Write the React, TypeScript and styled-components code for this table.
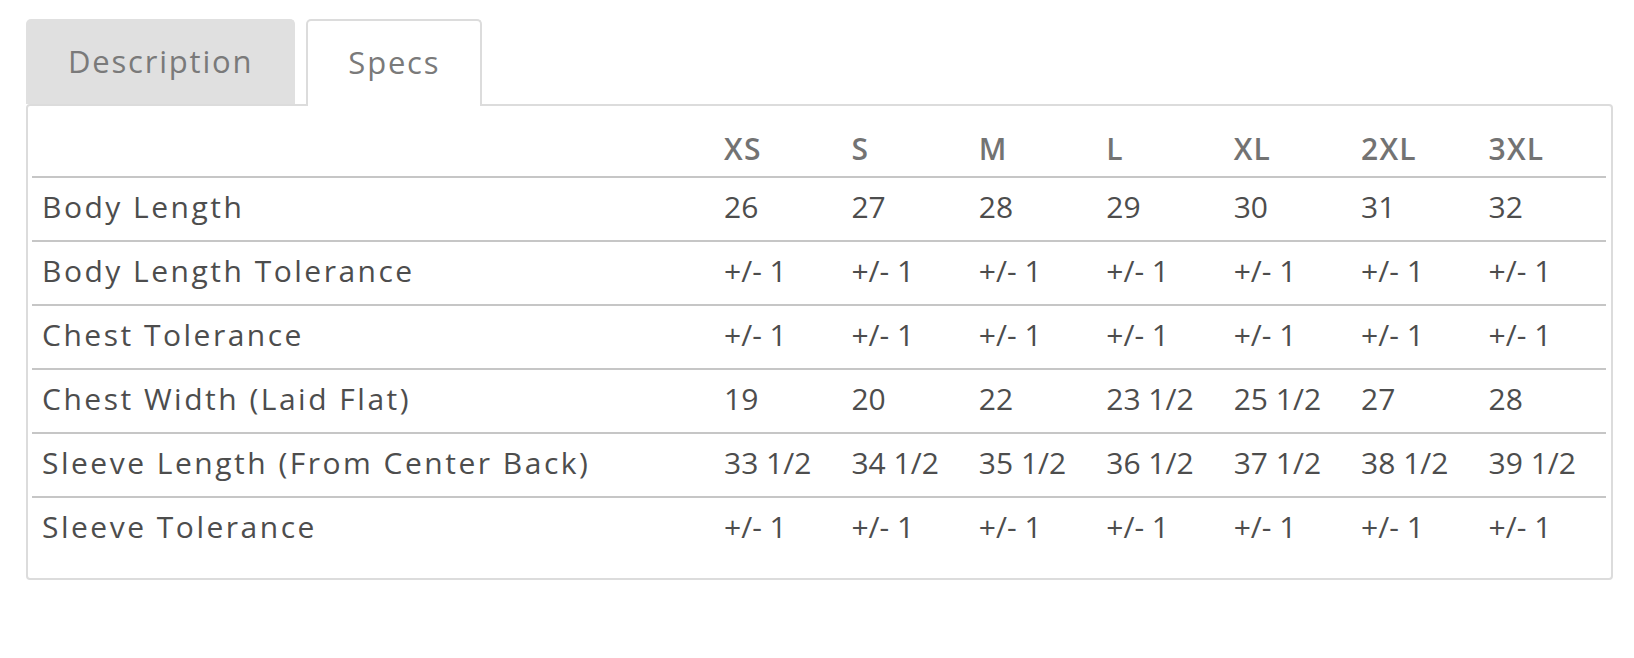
import React from "react";
import styled, { createGlobalStyle } from "styled-components";

const sizes = ["XS", "S", "M", "L", "XL", "2XL", "3XL"];

const rows: { label: string; values: string[] }[] = [
  { label: "Body Length", values: ["26", "27", "28", "29", "30", "31", "32"] },
  { label: "Body Length Tolerance", values: Array(7).fill("+/- 1") },
  { label: "Chest Tolerance", values: Array(7).fill("+/- 1") },
  {
    label: "Chest Width (Laid Flat)",
    values: ["19", "20", "22", "23 1/2", "25 1/2", "27", "28"],
  },
  {
    label: "Sleeve Length (From Center Back)",
    values: ["33 1/2", "34 1/2", "35 1/2", "36 1/2", "37 1/2", "38 1/2", "39 1/2"],
  },
  { label: "Sleeve Tolerance", values: Array(7).fill("+/- 1") },
];

const GlobalStyle = createGlobalStyle`
  body {
    margin: 0;
    background: #fff;
    font-family: "Open Sans", "Liberation Sans", sans-serif;
  }
`;

const App = () => {
  return (
    <Page>
      <GlobalStyle />
      <TabBar>
        <Tab>Description</Tab>
        <Tab active>Specs</Tab>
      </TabBar>
      <Panel>
        <SpecTable>
          <colgroup>
            <col style={{ width: 682 }} />
            {sizes.map((s) => (
              <col key={s} />
            ))}
          </colgroup>
          <thead>
            <tr>
              <HeadCell />
              {sizes.map((s) => (
                <HeadCell key={s}>{s}</HeadCell>
              ))}
            </tr>
          </thead>
          <tbody>
            {rows.map((r) => (
              <tr key={r.label}>
                <Cell label>{r.label}</Cell>
                {r.values.map((v, i) => (
                  <Cell key={i}>{v}</Cell>
                ))}
              </tr>
            ))}
          </tbody>
        </SpecTable>
      </Panel>
    </Page>
  );
};
export default App;

const Page = styled.div`
  padding: 19px 0 0 26px;
  width: 1587px;
`;

const TabBar = styled.div`
  display: flex;
  gap: 11px;
  position: relative;
  z-index: 1;
`;

const Tab = styled.div<{ active?: boolean }>`
  box-sizing: border-box;
  padding: 0 40px 4px;
  display: flex;
  align-items: center;
  font-size: 31px;
  letter-spacing: 1.8px;
  color: #7a7a7a;
  border-radius: 5px 5px 0 0;
  background: ${(p) => (p.active ? "#fff" : "#e0e0e0")};
  border: 2px solid ${(p) => (p.active ? "#dcdcdc" : "#e0e0e0")};
  border-bottom: none;
  margin-bottom: ${(p) => (p.active ? "-2px" : "0")};
  height: ${(p) => (p.active ? "87px" : "85px")};
`;

const Panel = styled.div`
  border: 2px solid #dcdcdc;
  border-radius: 4px;
  padding: 18px 5px 18px 4px;
  box-sizing: border-box;
`;

const SpecTable = styled.table`
  width: 100%;
  border-collapse: collapse;
  table-layout: fixed;
`;

const HeadCell = styled.th`
  height: 48px;
  padding: 0 10px 4px;
  text-align: left;
  font-size: 30px;
  font-weight: 600;
  letter-spacing: 1.2px;
  color: #737373;
  border-bottom: 2px solid #c6c6c6;
`;

const Cell = styled.td<{ label?: boolean }>`
  height: 56px;
  padding: 0 10px 6px;
  font-size: 30px;
  letter-spacing: ${(p) => (p.label ? "2.5px" : "0")};
  color: #4d4d4d;
  white-space: nowrap;
  border-top: 2px solid #c6c6c6;
  tr:first-child > & {
    border-top: none;
  }
`;
